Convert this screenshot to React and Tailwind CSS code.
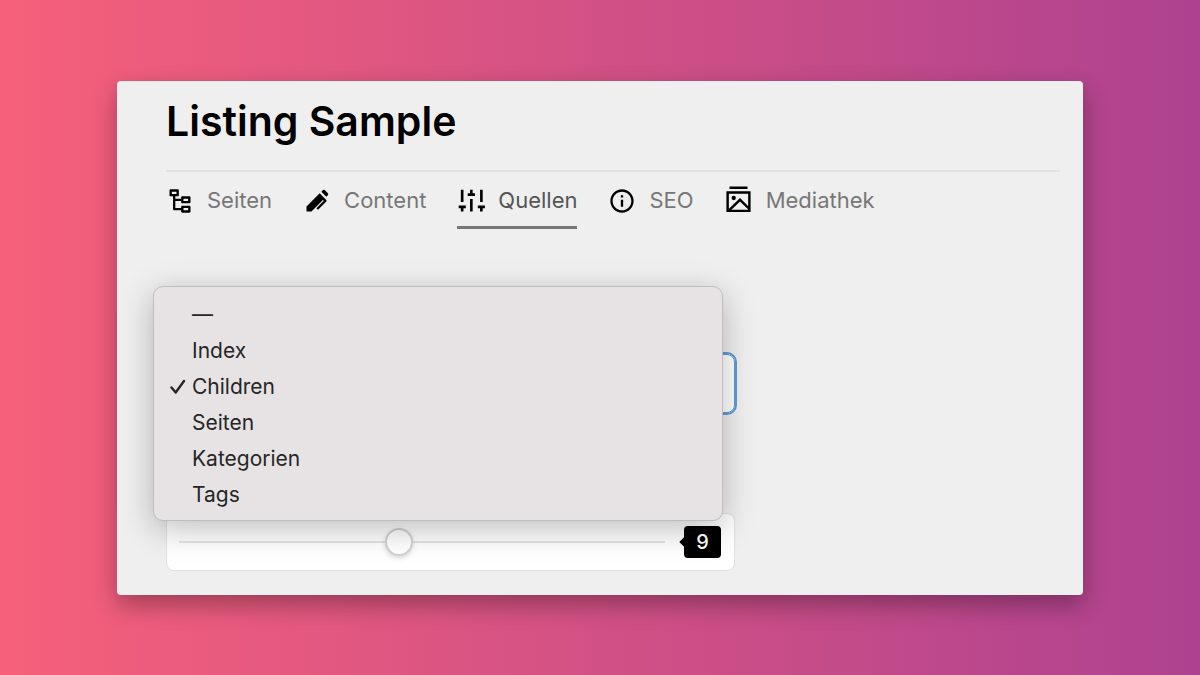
import { RiNodeTree, RiBallPenFill, RiInformationLine } from "react-icons/ri";

function SlidersIcon() {
  return (
    <svg className="size-[30px] shrink-0" viewBox="0 0 32 32" fill="none" stroke="currentColor" strokeWidth="2.8" aria-hidden="true">
      <path d="M5.500 4V17M1.800 22.200h7.600M5.500 22v5.300M15.300 4v5M11.400 9.200h7.800M15.300 13.800v13.500M26 4V17M22.200 22.200h7.600M26 22v5.300" />
    </svg>
  );
}

function GalleryIcon() {
  return (
    <svg className="size-[30px] shrink-0" viewBox="0 0 32 32" fill="none" stroke="currentColor" strokeWidth="2.600" aria-hidden="true">
      <path d="M4.800 1.800h19.200M2.800 7h23.200v19.500H2.800zM4 26.200l12-11.500 9.500 9.300" />
      <circle cx="9.300" cy="12.800" r="2.300" fill="currentColor" stroke="none" />
    </svg>
  );
}

const tabs = [
  { label: "Seiten", icon: <RiNodeTree className="size-7 shrink-0" aria-hidden="true" /> },
  { label: "Content", icon: <RiBallPenFill className="size-7 shrink-0" aria-hidden="true" /> },
  { label: "Quellen", icon: <SlidersIcon />, active: true },
  { label: "SEO", icon: <RiInformationLine className="size-7 shrink-0" aria-hidden="true" /> },
  { label: "Mediathek", icon: <GalleryIcon /> },
];

const options = ["—", "Index", "Children", "Seiten", "Kategorien", "Tags"];

function Tabs() {
  return (
    <nav className="flex gap-[31px] border-t-2 border-[#e2e2e2]" aria-label="Bereiche">
      {tabs.map((tab) => (
        <a
          key={tab.label}
          href={"#" + tab.label.toLowerCase()}
          aria-current={tab.active ? "page" : undefined}
          className={
            tab.active
              ? "relative flex h-[57px] items-center gap-[11px] text-[22px] text-[#555] after:absolute after:inset-x-0 after:bottom-0 after:h-[3px] after:bg-[#777]"
              : "flex h-[57px] items-center gap-[11px] text-[22px] text-[#777]"
          }
        >
          <span className="w-[30px] text-black">{tab.icon}</span>
          {tab.label}
        </a>
      ))}
    </nav>
  );
}

function OptionMenu() {
  return (
    <ul
      role="listbox"
      aria-label="Quelle"
      className="absolute -left-[13px] right-3 top-0 rounded-[10px] border border-[#c0bdbe] bg-[#e7e3e4] pt-2.5 pb-[7px] text-[21px] text-[#262626] shadow-[0_8px_32px_rgba(0,0,0,0.26)]"
    >
      {options.map((option) => (
        <li key={option} role="option" aria-selected={option === "Children"} className="flex h-9 items-center pl-3">
          <span className="flex w-[26px] shrink-0 items-center pl-1">
            {option === "Children" && (
              <svg className="size-4" viewBox="0 0 16 16" fill="none" stroke="currentColor" strokeWidth="2.400" strokeLinecap="round" strokeLinejoin="round" aria-hidden="true">
                <path d="M1.500 8.500l4.200 5L14 2" />
              </svg>
            )}
          </span>
          {option}
        </li>
      ))}
    </ul>
  );
}

export default function App() {
  return (
    <main className="min-h-screen bg-linear-to-r/srgb from-[#f6607a] to-[#ae4290] px-[117px] pt-[81px] pb-20 font-['Inter','Liberation_Sans',sans-serif]">
      <section className="rounded-sm bg-[#efefef] pb-6 pl-[49px] pr-[23px] shadow-[0_10px_24px_rgba(0,0,0,0.32)]">
        <h1 className="flex h-[89px] items-center pb-2 text-[41px] font-semibold text-black">Listing Sample</h1>
        <Tabs />
        <div className="relative mt-[57px] w-[569px] pt-[68px]">
          <select aria-label="Quelle auswählen" defaultValue="Children" className="block h-[59px] w-full appearance-none rounded-lg border border-[#5e9bd6] bg-white text-[22px] outline-2 outline-[#5e9bd6]">
            {options.map((option) => (
              <option key={option}>{option}</option>
            ))}
          </select>
          <div className="mt-[100px] flex h-[58px] items-center gap-[19px] rounded-lg border border-[#e0e0e0] bg-white pl-3 pr-[13px]">
            <input
              type="range"
              min="0"
              max="20"
              defaultValue="9"
              aria-label="Anzahl"
              className="h-7 min-w-0 flex-1 appearance-none bg-transparent [&::-webkit-slider-runnable-track]:h-0.5 [&::-webkit-slider-runnable-track]:bg-[#e4e4e4] [&::-webkit-slider-thumb]:-mt-[13px] [&::-webkit-slider-thumb]:size-7 [&::-webkit-slider-thumb]:appearance-none [&::-webkit-slider-thumb]:rounded-full [&::-webkit-slider-thumb]:border-2 [&::-webkit-slider-thumb]:border-[#d2d2d2] [&::-webkit-slider-thumb]:bg-white [&::-webkit-slider-thumb]:shadow-[0_2px_5px_rgba(0,0,0,0.15)]"
            />
            <output className="relative flex h-8 w-[37px] items-center justify-center rounded-sm bg-black text-xl font-medium text-white before:absolute before:-left-[3px] before:size-2 before:rotate-45 before:bg-black">
              9
            </output>
          </div>
          <OptionMenu />
        </div>
      </section>
    </main>
  );
}
